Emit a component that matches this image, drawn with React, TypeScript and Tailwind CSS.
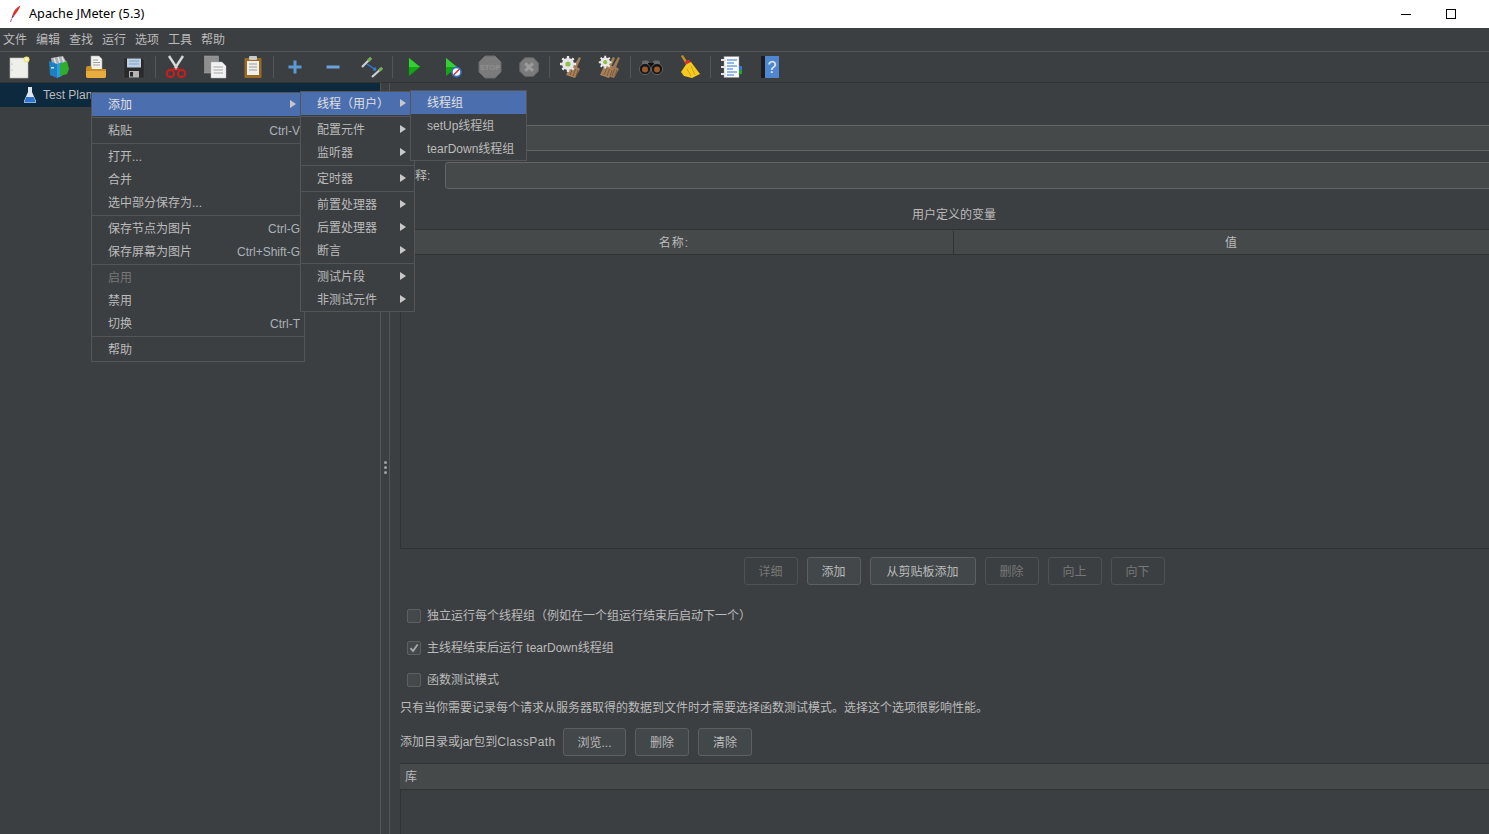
import type { ReactNode } from "react";

type MenuRow = { label: string; shortcut?: string; arrow?: boolean; active?: boolean; disabled?: boolean } | "sep";

const topMenus = ["文件", "编辑", "查找", "运行", "选项", "工具", "帮助"];

const mainMenu: MenuRow[] = [
  { label: "添加", arrow: true, active: true },
  "sep",
  { label: "粘贴", shortcut: "Ctrl-V" },
  "sep",
  { label: "打开..." },
  { label: "合并" },
  { label: "选中部分保存为..." },
  "sep",
  { label: "保存节点为图片", shortcut: "Ctrl-G" },
  { label: "保存屏幕为图片", shortcut: "Ctrl+Shift-G" },
  "sep",
  { label: "启用", disabled: true },
  { label: "禁用" },
  { label: "切换", shortcut: "Ctrl-T" },
  "sep",
  { label: "帮助" },
];

const addMenu: MenuRow[] = [
  { label: "线程（用户）", arrow: true, active: true },
  "sep",
  { label: "配置元件", arrow: true },
  { label: "监听器", arrow: true },
  "sep",
  { label: "定时器", arrow: true },
  "sep",
  { label: "前置处理器", arrow: true },
  { label: "后置处理器", arrow: true },
  { label: "断言", arrow: true },
  "sep",
  { label: "测试片段", arrow: true },
  { label: "非测试元件", arrow: true },
];

const threadMenu: MenuRow[] = [
  { label: "线程组", active: true },
  { label: "setUp线程组" },
  { label: "tearDown线程组" },
];

function Menu({ rows, className }: { rows: MenuRow[]; className: string }) {
  return (
    <div className={`absolute border border-[#555555] bg-[#3c3f41] ${className}`}>
      {rows.map((row, i) =>
        row === "sep" ? (
          <div key={i} className="h-[3px] pt-px">
            <div className="h-px bg-[#555555]" />
          </div>
        ) : (
          <div
            key={i}
            className={`relative flex h-[23px] items-center pl-[16px] ${
              row.active ? "bg-[#4b6eaf] text-[#e0e0e0]" : row.disabled ? "text-[#777777]" : "text-[#bbbbbb]"
            }`}
          >
            <span>{row.label}</span>
            {row.shortcut && <span className="ml-auto pr-[4px] text-[#a9b2b8]">{row.shortcut}</span>}
            {row.arrow && (
              <span className="absolute right-[8px] top-[7px] h-0 w-0 border-y-[4.5px] border-l-[6px] border-y-transparent border-l-[#c8c8c8]" />
            )}
          </div>
        )
      )}
    </div>
  );
}

function Btn({ children, w, off }: { children: ReactNode; w: string; off?: boolean }) {
  return (
    <div
      className={`flex h-[28px] items-center justify-center rounded-[3px] border pt-px ${w} ${
        off ? "border-[#4f5254] text-[#777777]" : "border-[#5e6060] bg-[#42474a] text-[#bbbbbb]"
      }`}
    >
      {children}
    </div>
  );
}

function Check({ label, checked }: { label: string; checked?: boolean }) {
  return (
    <div className="flex h-[32px] items-center pl-[7px]">
      <span className="flex h-[14px] w-[14px] items-center justify-center rounded-[2px] border border-[#5e6060] bg-[#43494a]">
        {checked && (
          <svg width="10" height="10" viewBox="0 0 10 10">
            <path d="M1.5 5.2 L4 8 L8.6 1.4" fill="none" stroke="#a9a9a9" strokeWidth="1.8" />
          </svg>
        )}
      </span>
      <span className="ml-[6px] text-[#bbbbbb]">{label}</span>
    </div>
  );
}

function Icon({ children }: { children: ReactNode }) {
  return (
    <div className="flex w-[38.4px] flex-none items-center justify-center">
      <svg width="24" height="24" viewBox="0 0 24 24">
        {children}
      </svg>
    </div>
  );
}

function Sep() {
  return (
    <div className="flex w-[3.5px] flex-none justify-center">
      <div className="h-[22px] w-px bg-[#555555]" />
    </div>
  );
}

function Broom({ x = 0, c1 = "#a8805a" }: { x?: number; c1?: string }) {
  return (
    <g transform={`translate(${x} 0)`}>
      <path d="M19 2 L21 3 L17 12 L20 14 L15 23 L6 20 L10 11 L14 11 Z" fill={c1} />
      <path d="M10 20 L13 13 M13 21 L15.5 14 M16 21 L18 15" stroke="#7a5a3c" strokeWidth="1" fill="none" />
    </g>
  );
}

function Gear() {
  return (
    <g>
      <circle cx="9" cy="9" r="6" fill="#e8e8e8" />
      <path
        d="M9 1 V4 M9 14 V17 M1 9 H4 M14 9 H17 M3.3 3.3 L5.4 5.4 M12.6 12.6 L14.7 14.7 M3.3 14.7 L5.4 12.6 M12.6 5.4 L14.7 3.3"
        stroke="#e8e8e8"
        strokeWidth="2.4"
      />
      <circle cx="9" cy="9" r="2.6" fill="#8fc04a" />
    </g>
  );
}

function Octagon({ children }: { children?: ReactNode }) {
  return (
    <>
      <path d="M7 1 H17 L23 7 V17 L17 23 H7 L1 17 V7 Z" fill="#7b7b7b" stroke="#6c6c6c" />
      {children}
    </>
  );
}

function Toolbar() {
  return (
    <div className="flex h-[31px] flex-none items-center border-b border-[#323232]">
      <Icon>
        <rect x="3" y="3" width="18" height="20" fill="#eeeeea" stroke="#bdbdb6" strokeWidth="0.6" />
        <circle cx="5" cy="9" r="0.6" fill="#999" />
        <circle cx="5" cy="15" r="0.6" fill="#999" />
        <circle cx="19.5" cy="4.5" r="3" fill="#f4e27a" />
        <circle cx="19.5" cy="4.5" r="1.4" fill="#fffbe0" />
      </Icon>
      <Icon>
        <path d="M5 3 L17 1 L21 8 L6 10 Z" fill="#a9b0b4" />
        <path d="M8 3 L10 9 M12 2 L14 8 M16 2 L18 7" stroke="#dfe3e5" strokeWidth="1.4" />
        <path d="M3 6 L11 9 V23 L4 20 Z" fill="#1f7fc4" />
        <path d="M11 9 L16 7 V21 L11 23 Z" fill="#2f9be0" />
        <path d="M14 9 L21 6 L23 14 L21 19 L14 21 Z" fill="#2fae2b" />
        <rect x="5" y="12" width="3" height="1.5" fill="#cfe6f7" />
      </Icon>
      <Icon>
        <path d="M7 1 H15 L18 4 V15 H7 Z" fill="#f2f2f0" stroke="#a8a8a4" strokeWidth="0.6" />
        <path d="M9 5 H14 M9 7.5 H16 M9 10 H16" stroke="#9a9a9a" strokeWidth="0.9" />
        <path d="M2 13 Q2 11 4 11 H7 L8 14 H22 V21 Q22 23 20 23 H4 Q2 23 2 21 Z" fill="#c98f25" />
        <path d="M2 16 H22 V21 Q22 23 20 23 H4 Q2 23 2 21 Z" fill="#e6ad3f" />
      </Icon>
      <Icon>
        <path d="M2 3 H20 L22 5 V23 H2 Z" fill="#2a2a2a" stroke="#4a4a4a" strokeWidth="0.5" />
        <rect x="5" y="3.5" width="14" height="9" fill="#bcd0e6" />
        <path d="M7 6 H17 M7 9 H17" stroke="#7fa3c9" strokeWidth="1" />
        <rect x="7" y="16" width="10" height="6.5" fill="#b4b4b4" />
        <rect x="8" y="17" width="3" height="4.5" fill="#2a2a2a" />
      </Icon>
      <Sep />
      <Icon>
        <path d="M5 1 L13.5 14 M19 1 L10.5 14" stroke="#d8d8d8" strokeWidth="2.4" />
        <circle cx="6.5" cy="18.5" r="3.6" fill="none" stroke="#c81e1e" strokeWidth="2.2" />
        <circle cx="17.5" cy="18.5" r="3.6" fill="none" stroke="#c81e1e" strokeWidth="2.2" />
        <path d="M9 15 L11 13 M15 15 L13 13" stroke="#c81e1e" strokeWidth="2" />
      </Icon>
      <Icon>
        <rect x="1.5" y="1" width="14" height="17" fill="#8f8f8f" stroke="#a8a8a8" strokeWidth="0.5" />
        <path d="M8 7 H19 L23 11 V23 H8 Z" fill="#f2f2f2" stroke="#b4b4b4" strokeWidth="0.5" />
        <path d="M10.5 12 H20 M10.5 15 H20 M10.5 18 H20" stroke="#a6a6a6" strokeWidth="1" />
      </Icon>
      <Icon>
        <rect x="3.5" y="3" width="17" height="20" rx="1" fill="#9a6a24" />
        <rect x="8" y="1" width="8" height="4" rx="1" fill="#c9c9c9" />
        <path d="M6 6 H18 V20 H6 Z" fill="#efefec" />
        <path d="M8 9 H16 M8 12 H16 M8 15 H16" stroke="#9b9b9b" strokeWidth="1" />
      </Icon>
      <Sep />
      <Icon>
        <path d="M12 5.5 V18.5 M5.5 12 H18.5" stroke="#5b9bd5" strokeWidth="3" />
      </Icon>
      <Icon>
        <path d="M5.5 12 H18.5" stroke="#6ba3d6" strokeWidth="3" />
      </Icon>
      <Icon>
        <path d="M2 12 L11 3" stroke="#d0d0d0" strokeWidth="2.2" />
        <path d="M8 6 L11 3" stroke="#74b347" strokeWidth="3" />
        <path d="M12 22 L22 13" stroke="#d0d0d0" strokeWidth="2.2" />
        <path d="M19 15.7 L22 13" stroke="#74b347" strokeWidth="3" />
        <path d="M7 9 L16 15 M16 15 L13 14.8 M16 15 L15 12.4" stroke="#2f7fe0" strokeWidth="1.3" fill="none" />
      </Icon>
      <Sep />
      <Icon>
        <path d="M7 3 L18 12 L7 21 Z" fill="#12a812" stroke="#0c7f0c" strokeWidth="0.5" />
        <path d="M7 3 L18 12 H7 Z" fill="#35d035" />
      </Icon>
      <Icon>
        <path d="M6 3 L17 12 L6 21 Z" fill="#12a812" />
        <path d="M6 3 L17 12 H6 Z" fill="#35d035" />
        <circle cx="16.5" cy="17" r="4.6" fill="#f2f6fb" stroke="#2a6fc9" strokeWidth="1.6" />
        <path d="M13.5 20 L19.5 14" stroke="#d6322a" strokeWidth="1.4" />
      </Icon>
      <Icon>
        <Octagon>
          <text x="12" y="14.8" textAnchor="middle" fontSize="7.5" fontWeight="700" fill="#8f8f8f" fontFamily="Liberation Sans, sans-serif">
            STOP
          </text>
        </Octagon>
      </Icon>
      <Icon>
        <g transform="translate(2 2) scale(0.84)">
          <Octagon>
            <path d="M7.5 7.5 L16.5 16.5 M16.5 7.5 L7.5 16.5" stroke="#9c9c9c" strokeWidth="3.6" />
          </Octagon>
        </g>
      </Icon>
      <Sep />
      <Icon>
        <Broom x={1} />
        <Gear />
      </Icon>
      <Icon>
        <Broom x={2} c1="#9c7a58" />
        <Broom x={-3} />
        <g transform="translate(1 0) scale(0.8)">
          <Gear />
        </g>
      </Icon>
      <Sep />
      <Icon>
        <rect x="3" y="5.5" width="7" height="6" rx="2" fill="#6a6a6a" />
        <rect x="14" y="5.5" width="7" height="6" rx="2" fill="#6a6a6a" />
        <rect x="9" y="8" width="6" height="6" fill="#111111" />
        <circle cx="6" cy="14" r="5.6" fill="#161616" stroke="#777777" strokeWidth="0.7" />
        <circle cx="18" cy="14" r="5.6" fill="#161616" stroke="#777777" strokeWidth="0.7" />
        <circle cx="6" cy="14.5" r="3" fill="#9a5a2c" />
        <circle cx="18" cy="14.5" r="3" fill="#9a5a2c" />
      </Icon>
      <Icon>
        <path d="M4 1 L6 0 L11 8 L9 9.5 Z" fill="#c98f25" />
        <path d="M7.5 7 L12 4.5 L14 7.5 L9.5 10.5 Z" fill="#d8302a" />
        <path d="M9 9.5 L14 7 L23 19 L15 23 L7 21 L4 17 Z" fill="#f3c91f" />
        <path d="M10 14 L14 21 M14 11 L18 20" stroke="#c99b12" strokeWidth="0.9" />
      </Icon>
      <Sep />
      <Icon>
        <rect x="5" y="1.5" width="15" height="21" fill="#fbfbfb" stroke="#8d8d8d" strokeWidth="0.5" />
        <path d="M8 5 H18 M8 8 H15 M8 11 H18 M8 14 H14 M8 17 H18 M8 20 H15" stroke="#2f79d8" strokeWidth="1.2" />
        <path d="M2 5 H7 M2 12 H7 M2 19 H7" stroke="#e4e4e4" strokeWidth="2" />
        <rect x="20" y="11" width="3" height="4" fill="#2f79d8" />
        <rect x="20" y="15" width="3" height="4" fill="#2aa32a" />
      </Icon>
      <Icon>
        <rect x="3" y="1" width="4" height="22" fill="#1c1c1c" />
        <rect x="7" y="1" width="14" height="22" fill="#4f86cf" />
        <text x="14" y="18" textAnchor="middle" fontSize="16" fill="#e8f0fa" fontFamily="Liberation Sans, sans-serif">
          ?
        </text>
      </Icon>
    </div>
  );
}

export default function App() {
  return (
    <div className="relative flex h-[834px] w-[1489px] flex-col overflow-hidden bg-[#3c3f41] text-[12px] leading-none [font-family:'Liberation_Sans','Noto_Sans_CJK_SC',sans-serif] [text-spacing-trim:space-all]">
      {/* Window title */}
      <div className="flex h-[28px] flex-none items-center bg-white pl-[8px] pr-[33px] text-black">
        <svg width="14" height="18" viewBox="0 0 14 18">
          <path d="M12.5 0.5 C9 2 6 5 4.5 10 L6.5 10.5 C9 7 11.5 4 12.5 0.5 Z" fill="#d8342c" />
          <path d="M4.5 10 C4 11.5 3.5 13 3.5 14 L5.5 12 L6.5 10.5 Z" fill="#8e2a6c" />
          <path d="M2.5 17 L3.5 14" stroke="#6a2a8c" strokeWidth="0.8" />
        </svg>
        <span className="mb-[2px] ml-[7px] text-[12.7px] [font-family:'Noto_Sans',sans-serif]">Apache JMeter (5.3)</span>
        <div className="ml-auto flex items-center gap-[35px]">
          <div className="h-px w-[10px] bg-black" />
          <div className="h-[10px] w-[10px] border border-black" />
        </div>
      </div>

      {/* Menu bar */}
      <div className="flex h-[24px] flex-none items-center gap-[9px] border-b border-[#555555] pl-[3px] text-[#bbbbbb]">
        {topMenus.map((m) => (
          <span key={m}>{m}</span>
        ))}
      </div>

      <Toolbar />

      <div className="flex min-h-0 flex-1">
        {/* Tree */}
        <div className="w-[380px] flex-none">
          <div className="flex h-[24px] items-center bg-[#0d293e] pl-[23px] text-[#bbbbbb]">
            <svg width="14" height="18" viewBox="0 0 14 18">
              <path d="M5 1 H9 V6 L13 15 Q13.5 17 12 17 H2 Q0.5 17 1 15 L5 6 Z" fill="#dfe6ee" />
              <path d="M3.2 11 H10.8 L12.4 15.2 Q12.6 16.4 11.6 16.4 H2.4 Q1.4 16.4 1.6 15.2 Z" fill="#2c74d0" />
            </svg>
            <span className="ml-[6px]">Test Plan</span>
          </div>
        </div>

        {/* Split handle */}
        <div className="flex w-[10px] flex-none flex-col items-center justify-center gap-[2px] border-x border-[#555555] pt-[18px]">
          <span className="h-[3px] w-[3px] rounded-full bg-[#a0a0a0]" />
          <span className="h-[3px] w-[3px] rounded-full bg-[#a0a0a0]" />
          <span className="h-[3px] w-[3px] rounded-full bg-[#a0a0a0]" />
        </div>

        {/* Test plan panel */}
        <div className="ml-[10px] flex w-[1108px] flex-none flex-col text-[#bbbbbb]">
          <div className="ml-[45px] mt-[42px] h-[26px] rounded-[2px] border border-[#646464] bg-[#45494a]" />
          <div className="mt-[11px] flex h-[27px] items-center">
            <span className="w-[45px] flex-none pl-[3px]">注释:</span>
            <div className="h-full flex-1 rounded-[3px] border border-[#646464] bg-[#45494a]" />
          </div>
          <div className="flex h-[40px] flex-none items-end justify-center pb-[8px]">用户定义的变量</div>
          <div className="flex h-[26px] flex-none border-y border-[#323232] bg-[#45494a] pt-px">
            <div className="flex w-[554px] flex-none items-center justify-center border-r border-[#323232] pr-[5px] tracking-[1px]">名称:</div>
            <div className="flex flex-1 items-center justify-center">值</div>
          </div>
          <div className="h-[294px] flex-none border-b border-l border-[#323232]" />
          <div className="mt-[8px] flex flex-none justify-center gap-[9px]">
            <Btn w="w-[54px]" off>详细</Btn>
            <Btn w="w-[54px]">添加</Btn>
            <Btn w="w-[106px]">从剪贴板添加</Btn>
            <Btn w="w-[54px]" off>删除</Btn>
            <Btn w="w-[54px]" off>向上</Btn>
            <Btn w="w-[54px]" off>向下</Btn>
          </div>
          <div className="mt-[15px] flex-none">
            <Check label="独立运行每个线程组（例如在一个组运行结束后启动下一个）" />
            <Check label="主线程结束后运行 tearDown线程组" checked />
            <Check label="函数测试模式" />
          </div>
          <div className="flex h-[24px] flex-none items-center">
            只有当你需要记录每个请求从服务器取得的数据到文件时才需要选择函数测试模式。选择这个选项很影响性能。
          </div>
          <div className="mt-[8px] flex flex-none items-center gap-[9px]">
            <span className="mr-[-2px] w-[156px]">
              添加目录或jar包到<span className="tracking-[0.4px]">ClassPath</span>
            </span>
            <Btn w="w-[63px]">浏览...</Btn>
            <Btn w="w-[54px]">删除</Btn>
            <Btn w="w-[54px]">清除</Btn>
          </div>
          <div className="mt-[7px] flex h-[27px] flex-none items-center border-y border-[#323232] bg-[#45494a] pl-[5px]">库</div>
          <div className="flex-1 border-l border-[#323232]" />
        </div>
      </div>

      {/* Context menus */}
      <Menu rows={mainMenu} className="left-[91px] top-[92px] w-[214px]" />
      <Menu rows={addMenu} className="left-[300px] top-[91px] w-[115px]" />
      <Menu rows={threadMenu} className="left-[410px] top-[90px] w-[117px]" />
    </div>
  );
}
